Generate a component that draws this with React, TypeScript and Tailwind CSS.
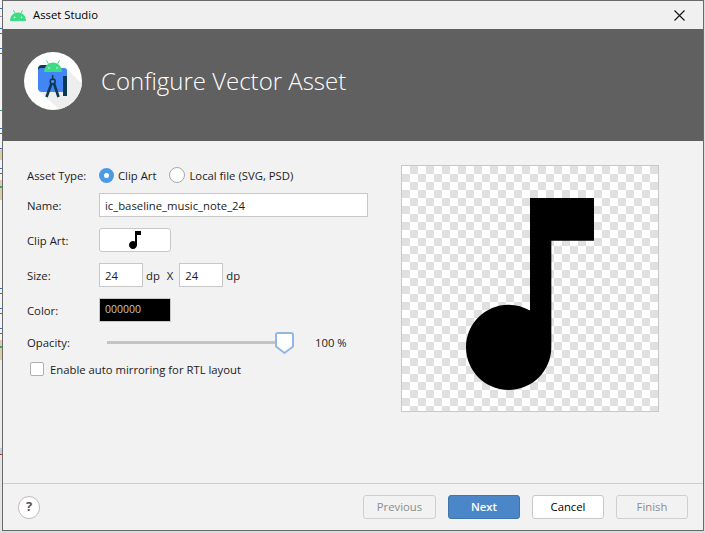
import React from "react";

// what shows of the window behind, left of the dialog: [height, colour]
const behind: [number, string][] = [
  [8, "bg-[#f4f4f4]"], [1, "bg-[#2a6fd6]"], [7, "bg-[#f4f4f4]"], [1, "bg-[#9a8fc0]"], [11, "bg-[#f4f4f4]"], [1, "bg-[#2a6fd6]"],
  [4, "bg-[#f4f4f4]"], [1, "bg-[#2a6fd6]"], [14, "bg-[#f4f4f4]"], [1, "bg-[#2a6fd6]"], [4, "bg-[#f4f4f4]"], [1, "bg-[#2a6fd6]"],
  [56, "bg-[#f4f4f4]"], [1, "bg-[#2e9e5a]"], [17, "bg-[#f4f4f4]"], [1, "bg-[#2a6fd6]"], [4, "bg-[#f4f4f4]"], [1, "bg-[#2a6fd6]"],
  [14, "bg-[#f4f4f4]"], [1, "bg-[#2a6fd6]"], [1, "bg-[#e4dcc0]"], [10, "bg-[#d8cfa6]"], [8, "bg-[#f4f4f4]"], [1, "bg-[#2a6fd6]"],
  [4, "bg-[#f4f4f4]"], [1, "bg-[#2a6fd6]"], [6, "bg-[#f4f4f4]"], [6, "bg-[#d8cfa6]"], [2, "bg-[#2fa89a]"], [12, "bg-[#d8cfa6]"],
  [88, "bg-[#f4f4f4]"], [1, "bg-[#2a6fd6]"], [4, "bg-[#f4f4f4]"], [1, "bg-[#2a6fd6]"], [14, "bg-[#f4f4f4]"], [1, "bg-[#2a6fd6]"],
  [4, "bg-[#f4f4f4]"], [1, "bg-[#2a6fd6]"], [14, "bg-[#f4f4f4]"], [1, "bg-[#2a6fd6]"], [4, "bg-[#f4f4f4]"], [1, "bg-[#2a6fd6]"],
  [6, "bg-[#f4f4f4]"], [6, "bg-[#d8cfa6]"], [2, "bg-[#2fa89a]"], [12, "bg-[#d8cfa6]"], [88, "bg-[#ececec]"], [6, "bg-[#c8d0e0]"],
  [1, "bg-[#b03030]"], [76, "bg-[#e4e4e4]"],
];

const AndroidHead = ({ className }: { className?: string }) => (
  <svg viewBox="0 0 16 11" className={className}>
    <path d="M3.4.3L5.2 3.4M12.600.3L10.800 3.400" stroke="#3ddc84" strokeWidth="1" />
    <path d="M0 11C0 6 3 2.400 8 2.400S16 6 16 11z" fill="#3ddc84" />
    <circle cx="4.500" cy="7.400" r=".8" fill="#f0f0f0" />
    <circle cx="11.500" cy="7.400" r=".8" fill="#f0f0f0" />
  </svg>
);

const StudioLogo = () => (
  <div className="w-[58px] h-[58px] rounded-full bg-white shrink-0 overflow-hidden">
    <svg viewBox="0 0 58 58" className="w-[58px] h-[58px]">
      <path d="M41 15L58 32V58H36L16 40z" fill="#eeeeee" />
      <path d="M14 17a4 4 0 0 1 4-4h5v8h-9z" fill="#0b3a52" />
      <path d="M14 19a3 3 0 0 1 3-3h23a3 3 0 0 1 3 3v18a3 3 0 0 1-3 3H18a4 4 0 0 1-4-4z" fill="#4285f4" />
      <path d="M20 20C20.500 14 24 10.500 29 10.500S37.500 14 38 20z" fill="#3ddc84" />
      <path d="M24.500 12L22.500 8.500M33.500 12L35.500 8.500" stroke="#3ddc84" strokeWidth="1" />
      <circle cx="25" cy="16" r=".7" fill="#ffffff" />
      <circle cx="33" cy="16" r=".7" fill="#ffffff" />
      <path d="M39 24h4v20h-4z" fill="#0b3a52" />
      <path d="M22.500 45L27.500 31.500M34.500 45L30 31.500" stroke="#0b3a52" strokeWidth="2.600" fill="none" />
      <circle cx="28.700" cy="29.500" r="2.500" fill="#4285f4" stroke="#0b3a52" strokeWidth="1.500" />
      <path d="M28.700 23v4" stroke="#0b3a52" strokeWidth="1.500" />
    </svg>
  </div>
);

const MusicNote = ({ className }: { className?: string }) => (
  <svg viewBox="0 0 24 24" className={className}>
    <path d="M12 3v10.55c-.59-.34-1.27-.55-2-.55-2.21 0-4 1.79-4 4s1.790 4 4 4 4-1.790 4-4V7h4V3h-6z" fill="#000" />
  </svg>
);

const Row = ({ label, className, children }: { label: string; className: string; children: React.ReactNode }) => (
  <div className={`flex items-center ${className}`}>
    <span className="w-[72px] shrink-0 pt-[2px]">{label}</span>
    {children}
  </div>
);

const FooterButton = ({ label, kind, wide }: { label: string; kind: "off" | "main" | "plain"; wide?: boolean }) => {
  const styles = {
    off: "border-[#cfcfcf] text-[#8c8c8c]",
    main: "border-[#3f74ad] bg-[#4a86c8] text-white font-semibold",
    plain: "border-[#c8c8c8] bg-white text-black",
  };
  return (
    <button className={`${wide ? "w-[73px]" : "w-[72px]"} h-[24px] rounded-[3px] border text-center ${styles[kind]}`}>{label}</button>
  );
};

export default function App() {
  return (
    <div
      className="w-[705px] h-[533px] overflow-hidden bg-[#dcdcdc] flex text-[11.3px] text-[#1c1c1c]"
      style={{ fontFamily: '"Open Sans", sans-serif' }}
    >
      <div className="w-[2px] shrink-0 flex flex-col">
        {behind.map(([h, color], i) => (
          <div key={i} className={color} style={{ height: h }} />
        ))}
      </div>

      <div className="w-[702px] h-[531px] shrink-0 bg-[#f2f2f2] border border-[#6a6a6a] flex flex-col">
        <div className="h-[28px] shrink-0 bg-[#f0f0f0] flex items-center pl-[7px] pr-[18px] text-black">
          <AndroidHead className="w-[16px] h-[11px]" />
          <span className="ml-[7px] pt-[1px]">Asset Studio</span>
          <svg viewBox="0 0 11 11" className="w-[11px] h-[11px] ml-auto">
            <path d="M.5.5l10 10M10.500.5l-10 10" stroke="#111" strokeWidth="1.100" />
          </svg>
        </div>

        <div className="h-[112px] shrink-0 bg-[#606060] flex items-center pl-[21px] pb-[8px]">
          <StudioLogo />
          <span className="ml-[19px] text-[24px] font-light text-white">Configure Vector Asset</span>
        </div>

        <div className="flex-1 flex pl-[24px]">
          <div className="w-[345px] pt-[24px] shrink-0">
            <Row label="Asset Type:" className="h-[20px]">
              <span className="w-[15px] h-[15px] rounded-full bg-[#4a9ae6] flex items-center justify-center">
                <span className="w-[5px] h-[5px] rounded-full bg-white" />
              </span>
              <span className="ml-[4px] pt-[2px]">Clip Art</span>
              <span className="ml-[13px] w-[16px] h-[16px] rounded-full bg-white border border-[#a8a8a8]" />
              <span className="ml-[4px] pt-[2px]">Local file (SVG, PSD)</span>
            </Row>
            <Row label="Name:" className="h-[24px] mt-[8px]">
              <div className="w-[269px] h-[24px] bg-white border border-[#c8c8c8] pl-[5px] leading-[24px]">ic_baseline_music_note_24</div>
            </Row>
            <Row label="Clip Art:" className="h-[24px] mt-[11px]">
              <div className="w-[72px] h-[24px] bg-white border border-[#c8c8c8] rounded-[3px] flex items-center justify-center">
                <MusicNote className="w-[24px] h-[24px] shrink-0" />
              </div>
            </Row>
            <Row label="Size:" className="h-[24px] mt-[11px]">
              <div className="w-[44px] h-[24px] bg-white border border-[#c8c8c8] pl-[5px] leading-[24px]">24</div>
              <span className="ml-[3px] pt-[2px]">dp</span>
              <span className="ml-[7px] pt-[2px]">X</span>
              <div className="ml-[6px] w-[44px] h-[24px] bg-white border border-[#c8c8c8] pl-[5px] leading-[24px]">24</div>
              <span className="ml-[3px] pt-[2px]">dp</span>
            </Row>
            <Row label="Color:" className="h-[24px] mt-[11px]">
              <div className="w-[72px] h-[24px] bg-black border border-[#c8c8c8] pl-[5px] leading-[21px] text-[10.500px] text-[#c4c4c4]">000000</div>
            </Row>
            <div className="flex items-center h-[20px] mt-[10px]">
              <span className="w-[80px] shrink-0 pt-[2px]">Opacity:</span>
              <div className="relative w-[172px] h-[3px] bg-[#c4c4c4]">
                <svg viewBox="0 0 19 22" className="absolute left-[168px] top-[-9px] w-[19px] h-[22px]">
                  <path d="M3 1h13a2 2 0 0 1 2 2v11.500l-8.500 6.500L1 14.500V3a2 2 0 0 1 2-2z" fill="#ffffff" stroke="#8fb8e8" strokeWidth="2" strokeLinejoin="round" />
                </svg>
              </div>
              <span className="ml-[36px] pt-[2px]">100 %</span>
            </div>
            <div className="flex items-center h-[20px] mt-[7px] pl-[3px]">
              <span className="w-[14px] h-[14px] bg-white border border-[#b0b0b0] rounded-[2px]" />
              <span className="ml-[6px] pt-[2px]">Enable auto mirroring for RTL layout</span>
            </div>
          </div>

          <div className="ml-[29px] mt-[24px] w-[258px] h-[247px] border border-[#c8c8c8] overflow-hidden bg-white bg-[conic-gradient(#e0e0e0_25%,#ffffff_0_50%,#e0e0e0_0_75%,#ffffff_0)] bg-[length:16px_16px]">
            <MusicNote className="w-[256px] h-[256px]" />
          </div>
        </div>

        <div className="h-[47px] shrink-0 border-t border-[#cfcfcf] flex items-center pl-[15px] pr-[15px]">
          <span className="w-[22px] h-[23px] rounded-full bg-white border border-[#bdbdbd] flex items-center justify-center font-bold text-[#555555] text-[13px]">?</span>
          <div className="ml-auto flex gap-[12px]">
            <FooterButton label="Previous" kind="off" wide />
            <FooterButton label="Next" kind="main" />
            <FooterButton label="Cancel" kind="plain" />
            <FooterButton label="Finish" kind="off" />
          </div>
        </div>
      </div>
    </div>
  );
}
